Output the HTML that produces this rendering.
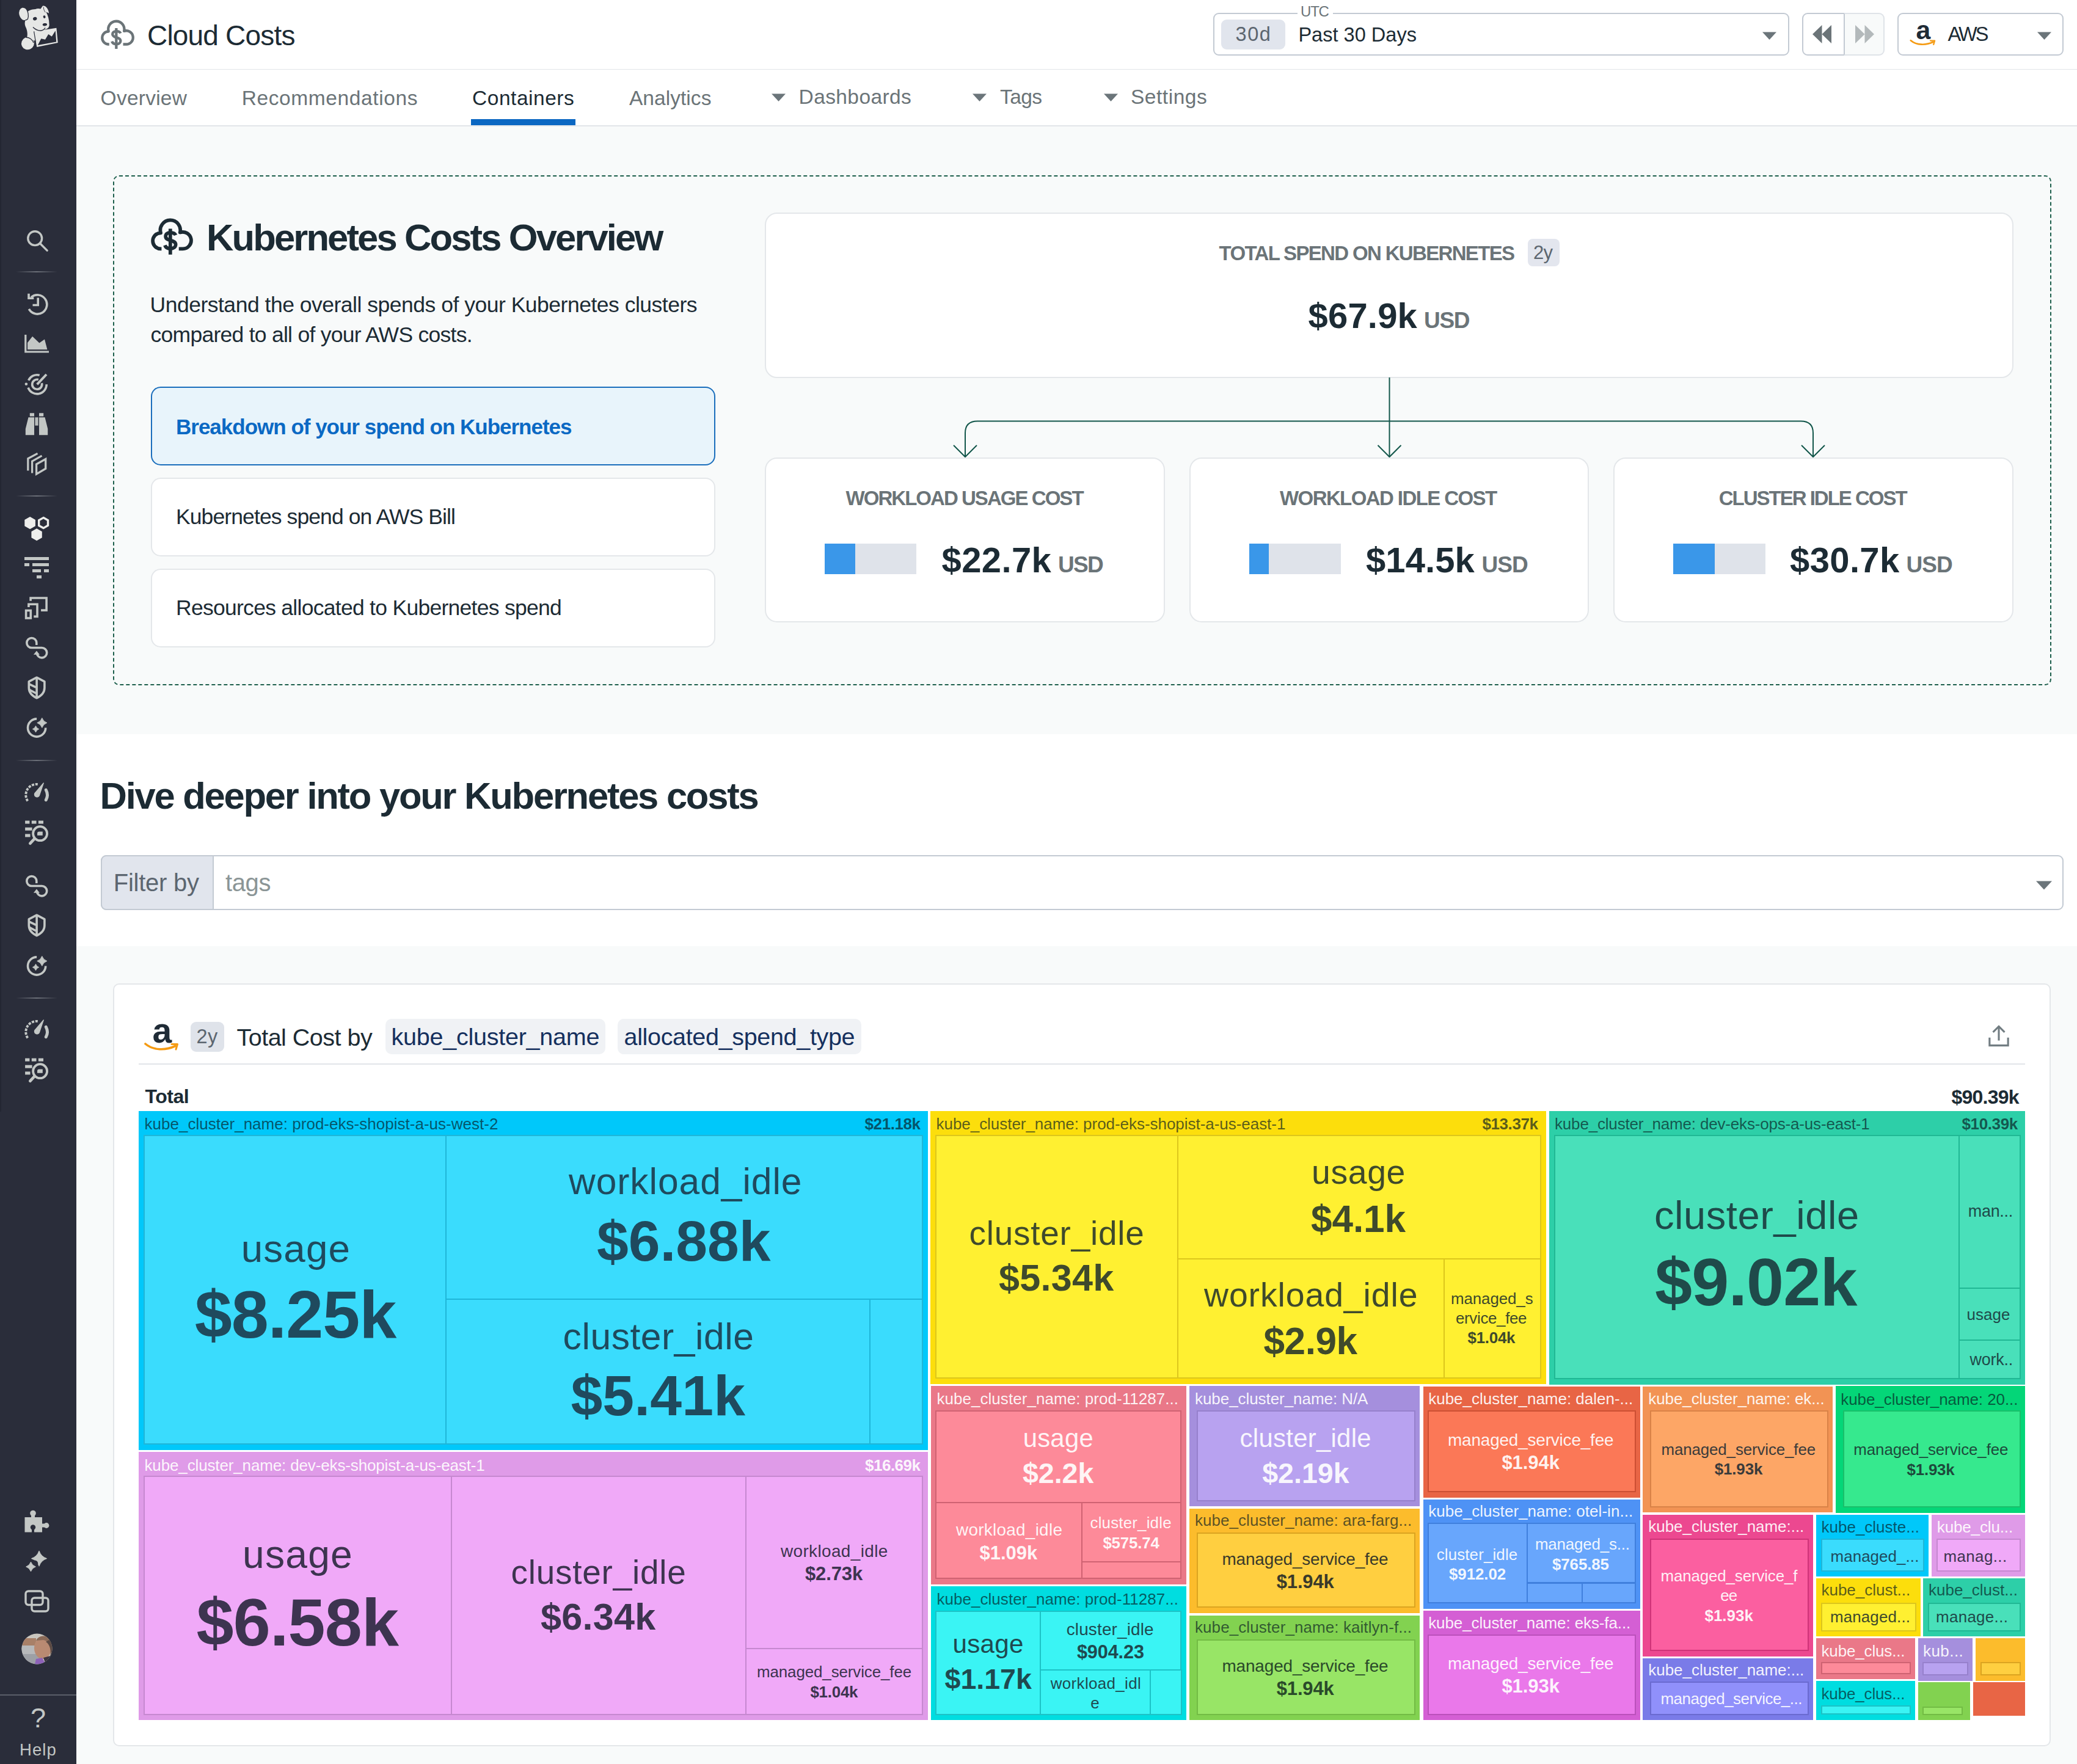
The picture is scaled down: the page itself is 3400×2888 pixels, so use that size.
<!DOCTYPE html>
<html lang="en"><head><meta charset="utf-8"><title>Cloud Costs</title>
<style>
html,body{margin:0;padding:0;}
body{width:3400px;height:2888px;position:relative;overflow:hidden;background:#f8fafa;font-family:"Liberation Sans",sans-serif;}
.b{position:absolute;box-sizing:border-box;}
.t{position:absolute;white-space:nowrap;line-height:1;}
svg{position:absolute;overflow:visible;}

</style></head><body>
<div class="b" style="left:124.0px;top:0.0px;width:3276.0px;height:113.0px;background:#fff;"></div>
<div class="b" style="left:124.0px;top:112.7px;width:3276.0px;height:2.0px;background:#e2e5e9;"></div>
<div class="b" style="left:124.0px;top:114.0px;width:3276.0px;height:91.5px;background:#fff;"></div>
<div class="b" style="left:124.0px;top:204.8px;width:3276.0px;height:1.8px;background:#e2e5e9;"></div>
<div class="b" style="left:124.0px;top:1202.0px;width:3276.0px;height:347.0px;background:#fff;"></div>
<svg style="left:165px;top:32px" width="55" height="49" viewBox="0 0 56 50" fill="none" stroke="#6b7478" stroke-width="4.4" stroke-linecap="butt" stroke-linejoin="round">
<path d="M14 41.3 H13 A10.7 10.7 0 0 1 12.92 19.90 A13.4 13.4 0 1 1 38.83 19.31 A11.3 11.3 0 1 1 42.5 41.3 H37.2"/>
<path d="M25.8 14.3 V49" stroke-width="4.4"/>
<path d="M33 23 C32 20.5 29.5 19.5 26 19.5 C22 19.5 19.5 21.5 19.5 24.5 C19.5 28 22.5 29 26 30 C30 31 33 32 33 35.5 C33 39 30 41 26 41 C22 41 19.5 39.5 18.5 36.5" stroke-width="4.4"/>
</svg>
<div class="t" style="left:241.0px;top:34.6px;font-size:46.0px;letter-spacing:-0.81px;color:#1c2b34;">Cloud Costs</div>
<div class="b" style="left:1986.0px;top:21.0px;width:943.0px;height:70.0px;background:#fff;border:2px solid #c3cad3;border-radius:9px;"></div>
<div class="b" style="left:2123.5px;top:19.0px;width:58.0px;height:6.0px;background:#fff;"></div>
<div class="t" style="left:2129.0px;top:7.4px;font-size:24.0px;letter-spacing:-1.20px;color:#6b7478;">UTC</div>
<div class="b" style="left:1999.0px;top:32.0px;width:105.0px;height:49.0px;background:#e1e5ed;border-radius:9px;"></div>
<div class="t" style="left:2022.6px;top:39.8px;font-size:32.5px;letter-spacing:1.53px;color:#5c6670;">30d</div>
<div class="t" style="left:2125.4px;top:40.8px;font-size:32.5px;letter-spacing:0.02px;color:#1c2b34;">Past 30 Days</div>
<svg style="left:2885px;top:52px" width="23" height="13" viewBox="0 0 23 13"><path d="M0 0.5 H23 L11.5 13 Z" fill="#6b757a"/></svg>
<div class="b" style="left:2950.0px;top:21.0px;width:70.0px;height:70.0px;background:#fff;border:2px solid #c3cad3;border-radius:9px 0 0 9px;"></div>
<div class="b" style="left:3018.0px;top:21.0px;width:67.0px;height:70.0px;background:#f8fafa;border:2px solid #dfe3e8;border-radius:0 9px 9px 0;border-left:2px solid #c3cad3;"></div>
<svg style="left:2967px;top:41px" width="31" height="30" viewBox="0 0 31 30"><path d="M15.5 0 V30 L0 15 Z M31 0 V30 L15.5 15 Z" fill="#6b7478"/></svg>
<svg style="left:3037px;top:41px" width="31" height="30" viewBox="0 0 31 30"><path d="M0 0 V30 L15.5 15 Z M15.5 0 V30 L31 15 Z" fill="#b3b9bb"/></svg>
<div class="b" style="left:3106.0px;top:21.0px;width:272.0px;height:70.0px;background:#fff;border:2px solid #c3cad3;border-radius:9px;"></div>
<svg style="left:3127px;top:39.5px" width="42.0" height="35.2" viewBox="0 0 56 47">
<text x="12.5" y="32.6" font-family="Liberation Sans, sans-serif" font-weight="bold" font-size="57" fill="#1f2b36">a</text>
<path d="M1 35 C14 46 34 46 50 38.5" fill="none" stroke="#f59b13" stroke-width="3.6" stroke-linecap="round"/>
<path d="M44 35.5 L53.5 35.5 L51 44" fill="none" stroke="#f59b13" stroke-width="3" stroke-linecap="round" stroke-linejoin="round"/>
</svg>
<div class="t" style="left:3188.5px;top:40.1px;font-size:32.5px;letter-spacing:-2.97px;color:#1c2b34;">AWS</div>
<svg style="left:3335px;top:52px" width="23" height="13" viewBox="0 0 23 13"><path d="M0 0.5 H23 L11.5 13 Z" fill="#6b757a"/></svg>
<div class="t" style="left:164.6px;top:143.6px;font-size:33.5px;letter-spacing:0.24px;color:#6b7478;">Overview</div>
<div class="t" style="left:395.7px;top:143.6px;font-size:33.5px;letter-spacing:0.60px;color:#6b7478;">Recommendations</div>
<div class="t" style="left:773.0px;top:143.6px;font-size:33.5px;letter-spacing:0.53px;color:#1c2b34;">Containers</div>
<div class="b" style="left:771.0px;top:195.0px;width:171.0px;height:10.0px;background:#0b67c2;"></div>
<div class="t" style="left:1029.9px;top:143.6px;font-size:33.5px;letter-spacing:0.06px;color:#6b7478;">Analytics</div>
<svg style="left:1263.4px;top:152.5px" width="23" height="13" viewBox="0 0 23 13"><path d="M0 0.5 H23 L11.5 13 Z" fill="#6b757a"/></svg>
<div class="t" style="left:1307.6px;top:142.1px;font-size:33.5px;letter-spacing:0.39px;color:#6b7478;">Dashboards</div>
<svg style="left:1592px;top:152.5px" width="23" height="13" viewBox="0 0 23 13"><path d="M0 0.5 H23 L11.5 13 Z" fill="#6b757a"/></svg>
<div class="t" style="left:1637.0px;top:142.1px;font-size:33.5px;letter-spacing:-0.57px;color:#6b7478;">Tags</div>
<svg style="left:1806.5px;top:152.5px" width="23" height="13" viewBox="0 0 23 13"><path d="M0 0.5 H23 L11.5 13 Z" fill="#6b757a"/></svg>
<div class="t" style="left:1851.0px;top:142.1px;font-size:33.5px;letter-spacing:0.53px;color:#6b7478;">Settings</div>
<div class="b" style="left:185.0px;top:286.5px;width:3173.0px;height:835.0px;border:2px solid #1d5f4c;border-radius:10px;border-style:dashed;"></div>
<svg style="left:247px;top:357px" width="69" height="61" viewBox="0 0 56 50" fill="none" stroke="#1c2b34" stroke-width="4.7" stroke-linecap="butt" stroke-linejoin="round">
<path d="M14 41.3 H13 A10.7 10.7 0 0 1 12.92 19.90 A13.4 13.4 0 1 1 38.83 19.31 A11.3 11.3 0 1 1 42.5 41.3 H37.2"/>
<path d="M25.8 14.3 V49" stroke-width="4.7"/>
<path d="M33 23 C32 20.5 29.5 19.5 26 19.5 C22 19.5 19.5 21.5 19.5 24.5 C19.5 28 22.5 29 26 30 C30 31 33 32 33 35.5 C33 39 30 41 26 41 C22 41 19.5 39.5 18.5 36.5" stroke-width="4.7"/>
</svg>
<div class="t" style="left:338.0px;top:357.9px;font-size:61.5px;letter-spacing:-2.86px;color:#1c2b34;font-weight:bold;">Kubernetes Costs Overview</div>
<div class="t" style="left:245.5px;top:482.4px;font-size:35.5px;letter-spacing:-0.49px;color:#1c2b34;">Understand the overall spends of your Kubernetes clusters</div>
<div class="t" style="left:246.5px;top:530.9px;font-size:35.5px;letter-spacing:-0.73px;color:#1c2b34;">compared to all of your AWS costs.</div>
<div class="b" style="left:247.0px;top:633.0px;width:924.0px;height:129.0px;background:#e8f4fb;border:2px solid #1a6ebc;border-radius:16px;"></div>
<div class="t" style="left:288.0px;top:680.9px;font-size:35.0px;letter-spacing:-1.00px;color:#0b69c4;font-weight:bold;">Breakdown of your spend on Kubernetes</div>
<div class="b" style="left:247.0px;top:782.0px;width:924.0px;height:129.0px;background:#fff;border:2px solid #e4e7ea;border-radius:16px;"></div>
<div class="t" style="left:288.0px;top:829.4px;font-size:35.5px;letter-spacing:-0.90px;color:#1c2b34;">Kubernetes spend on AWS Bill</div>
<div class="b" style="left:247.0px;top:931.0px;width:924.0px;height:129.0px;background:#fff;border:2px solid #e4e7ea;border-radius:16px;"></div>
<div class="t" style="left:288.0px;top:978.3px;font-size:35.5px;letter-spacing:-0.72px;color:#1c2b34;">Resources allocated to Kubernetes spend</div>
<div class="b" style="left:1251.5px;top:348.3px;width:2044.7px;height:270.7px;background:#fff;border:2px solid #e4e7ea;border-radius:20px;"></div>
<div class="t" style="left:1995.5px;top:397.6px;font-size:33.0px;letter-spacing:-1.66px;color:#6b7478;font-weight:bold;">TOTAL SPEND ON KUBERNETES</div>
<div class="b" style="left:2501.0px;top:391.0px;width:52.0px;height:45.0px;background:#e3e6ee;border-radius:8px;"></div>
<div class="t" style="left:2510.0px;top:397.8px;font-size:31.0px;letter-spacing:-0.74px;color:#5c6670;">2y</div>
<div class="t" style="left:2141.5px;top:487.9px;font-size:58.0px;letter-spacing:0.19px;color:#1c2b34;font-weight:bold;">$67.9k</div>
<div class="t" style="left:2331.0px;top:505.7px;font-size:37.0px;letter-spacing:-1.30px;color:#6b7478;font-weight:bold;">USD</div>
<svg style="left:1540px;top:618px" width="1480" height="140" viewBox="1540 618 1480 140" fill="none" stroke="#12564a" stroke-width="2">
<path d="M2274.5 618 V747"/>
<path d="M1580 747 V709 Q1580 689.5 1600 689.5 H2948 Q2968 689.5 2968 709 V747"/>
<path d="M1561 729 L1580 748 L1599 729"/>
<path d="M2255.5 729 L2274.5 748 L2293.5 729"/>
<path d="M2949 729 L2968 748 L2987 729"/>
</svg>
<div class="b" style="left:1251.5px;top:748.9px;width:655.9px;height:269.8px;background:#fff;border:2px solid #e4e7ea;border-radius:20px;"></div>
<div class="t" style="left:1384.5px;top:798.6px;font-size:33.0px;letter-spacing:-1.96px;color:#6b7478;font-weight:bold;">WORKLOAD USAGE COST</div>
<div class="b" style="left:1350.0px;top:890.0px;width:150.0px;height:50.0px;background:#dfe3ea;"></div>
<div class="b" style="left:1350.0px;top:890.0px;width:50.0px;height:50.0px;background:#3a97e9;"></div>
<div class="t" style="left:1541.6px;top:888.3px;font-size:58.0px;letter-spacing:0.35px;color:#1c2b34;font-weight:bold;">$22.7k</div>
<div class="t" style="left:1732.0px;top:906.1px;font-size:37.0px;letter-spacing:-1.70px;color:#6b7478;font-weight:bold;">USD</div>
<div class="b" style="left:1947.0px;top:748.9px;width:654.4px;height:269.8px;background:#fff;border:2px solid #e4e7ea;border-radius:20px;"></div>
<div class="t" style="left:2095.0px;top:798.6px;font-size:33.0px;letter-spacing:-1.59px;color:#6b7478;font-weight:bold;">WORKLOAD IDLE COST</div>
<div class="b" style="left:2044.6px;top:890.0px;width:150.4px;height:50.0px;background:#dfe3ea;"></div>
<div class="b" style="left:2044.6px;top:890.0px;width:32.4px;height:50.0px;background:#3a97e9;"></div>
<div class="t" style="left:2236.0px;top:888.3px;font-size:58.0px;letter-spacing:0.07px;color:#1c2b34;font-weight:bold;">$14.5k</div>
<div class="t" style="left:2425.6px;top:906.1px;font-size:37.0px;letter-spacing:-1.00px;color:#6b7478;font-weight:bold;">USD</div>
<div class="b" style="left:2641.0px;top:748.9px;width:655.2px;height:269.8px;background:#fff;border:2px solid #e4e7ea;border-radius:20px;"></div>
<div class="t" style="left:2813.7px;top:798.6px;font-size:33.0px;letter-spacing:-2.00px;color:#6b7478;font-weight:bold;">CLUSTER IDLE COST</div>
<div class="b" style="left:2739.4px;top:890.0px;width:150.6px;height:50.0px;background:#dfe3ea;"></div>
<div class="b" style="left:2739.4px;top:890.0px;width:68.0px;height:50.0px;background:#3a97e9;"></div>
<div class="t" style="left:2930.0px;top:888.3px;font-size:58.0px;letter-spacing:0.37px;color:#1c2b34;font-weight:bold;">$30.7k</div>
<div class="t" style="left:3120.5px;top:906.1px;font-size:37.0px;letter-spacing:-0.95px;color:#6b7478;font-weight:bold;">USD</div>
<div class="t" style="left:163.5px;top:1271.9px;font-size:61.5px;letter-spacing:-2.24px;color:#1c2b34;font-weight:bold;">Dive deeper into your Kubernetes costs</div>
<div class="b" style="left:164.5px;top:1399.5px;width:3213.5px;height:90.5px;background:#fff;border:2px solid #c3cad3;border-radius:9px;"></div>
<div class="b" style="left:164.5px;top:1399.5px;width:185.5px;height:90.5px;background:#e1e5ed;border:2px solid #c3cad3;border-radius:9px 0 0 9px;"></div>
<div class="t" style="left:185.8px;top:1424.9px;font-size:40.0px;letter-spacing:-0.25px;color:#5c6670;">Filter by</div>
<div class="t" style="left:369.0px;top:1424.9px;font-size:40.0px;letter-spacing:-0.37px;color:#8b9596;">tags</div>
<svg style="left:3333px;top:1442px" width="26" height="14.5" viewBox="0 0 26 14.5"><path d="M0 0.5 H26 L13.0 14.5 Z" fill="#6b757a"/></svg>
<div class="b" style="left:184.6px;top:1609.7px;width:3172.8px;height:1249.1px;background:#fff;border:2px solid #e4e7ea;border-radius:10px;"></div>
<svg style="left:236.5px;top:1673.5px" width="56.0" height="47.0" viewBox="0 0 56 47">
<text x="12.5" y="32.6" font-family="Liberation Sans, sans-serif" font-weight="bold" font-size="57" fill="#1f2b36">a</text>
<path d="M1 35 C14 46 34 46 50 38.5" fill="none" stroke="#f59b13" stroke-width="3.6" stroke-linecap="round"/>
<path d="M44 35.5 L53.5 35.5 L51 44" fill="none" stroke="#f59b13" stroke-width="3" stroke-linecap="round" stroke-linejoin="round"/>
</svg>
<div class="b" style="left:312.0px;top:1673.0px;width:55.0px;height:49.0px;background:#dfe3ea;border-radius:9px;"></div>
<div class="t" style="left:321.5px;top:1680.5px;font-size:32.5px;letter-spacing:0.43px;color:#5c6670;">2y</div>
<div class="t" style="left:387.5px;top:1678.6px;font-size:39.5px;letter-spacing:-0.51px;color:#1c2b34;">Total Cost by</div>
<div class="b" style="left:631.0px;top:1667.5px;width:359.5px;height:58.5px;background:#f0f2f5;border-radius:10px;"></div>
<div class="t" style="left:640.5px;top:1677.6px;font-size:39.5px;letter-spacing:-0.24px;color:#15305e;">kube_cluster_name</div>
<div class="b" style="left:1011.0px;top:1667.5px;width:399.0px;height:58.5px;background:#f0f2f5;border-radius:10px;"></div>
<div class="t" style="left:1021.5px;top:1677.6px;font-size:39.5px;letter-spacing:-0.33px;color:#15305e;">allocated_spend_type</div>
<svg style="left:3253.5px;top:1678px" width="36" height="36" viewBox="0 0 38 38" fill="none" stroke="#727d82" stroke-width="3.3"><path d="M3 22 V35.5 H35 V22"/><path d="M19 27 V3"/><path d="M9 12.5 L19 2.5 L29 12.5"/></svg>
<div class="b" style="left:227.0px;top:1741.0px;width:3088.0px;height:2.0px;background:#e2e5e9;"></div>
<div class="t" style="left:237.6px;top:1778.9px;font-size:32.0px;letter-spacing:-0.52px;color:#1c2b34;font-weight:bold;">Total</div>
<div class="t" style="left:3194.5px;top:1779.9px;font-size:32.0px;letter-spacing:-0.76px;color:#1c2b34;font-weight:bold;">$90.39k</div>
<div class="b" style="left:227.0px;top:1819.0px;width:1292.0px;height:555.0px;background:#00c8fa;"></div>
<div class="b" style="left:235.0px;top:1858.0px;width:496.0px;height:507.0px;background:#3adcfd;border:2px solid #1fb6d8;"></div>
<div class="b" style="left:729.0px;top:1858.0px;width:782.0px;height:269.5px;background:#3adcfd;border:2px solid #1fb6d8;"></div>
<div class="b" style="left:729.0px;top:2125.5px;width:696.0px;height:239.5px;background:#3adcfd;border:2px solid #1fb6d8;"></div>
<div class="b" style="left:1423.0px;top:2125.5px;width:88.0px;height:239.5px;background:#3adcfd;border:2px solid #1fb6d8;"></div>
<div class="t" style="left:236.5px;top:1827.0px;font-size:26.0px;letter-spacing:0.02px;color:rgba(8,26,34,0.68);">kube_cluster_name: prod-eks-shopist-a-us-west-2</div>
<div class="t" style="left:1415.6px;top:1826.5px;font-size:26.0px;letter-spacing:-0.44px;color:rgba(8,26,34,0.68);font-weight:bold;">$21.18k</div>
<div class="t" style="left:394.8px;top:2012.1px;font-size:63.7px;letter-spacing:1.15px;color:#1f4a5e;">usage</div>
<div class="t" style="left:318.8px;top:2097.5px;font-size:109.7px;letter-spacing:-1.01px;color:#1f4a5e;font-weight:bold;">$8.25k</div>
<div class="t" style="left:931.0px;top:1904.2px;font-size:60.5px;letter-spacing:0.96px;color:#1f4a5e;">workload_idle</div>
<div class="t" style="left:977.0px;top:1986.1px;font-size:93.1px;letter-spacing:-0.02px;color:#1f4a5e;font-weight:bold;">$6.88k</div>
<div class="t" style="left:921.6px;top:2157.7px;font-size:60.5px;letter-spacing:0.57px;color:#1f4a5e;">cluster_idle</div>
<div class="t" style="left:934.4px;top:2239.4px;font-size:93.1px;letter-spacing:0.16px;color:#1f4a5e;font-weight:bold;">$5.41k</div>
<div class="b" style="left:227.0px;top:2376.8px;width:1292.0px;height:439.7px;background:#df9be8;"></div>
<div class="b" style="left:235.0px;top:2415.7px;width:505.0px;height:391.9px;background:#f0a9f8;border:2px solid #c688d0;"></div>
<div class="b" style="left:738.0px;top:2415.7px;width:484.0px;height:391.9px;background:#f0a9f8;border:2px solid #c688d0;"></div>
<div class="b" style="left:1220.0px;top:2415.7px;width:291.0px;height:284.3px;background:#f0a9f8;border:2px solid #c688d0;"></div>
<div class="b" style="left:1220.0px;top:2698.0px;width:291.0px;height:109.6px;background:#f0a9f8;border:2px solid #c688d0;"></div>
<div class="t" style="left:236.5px;top:2385.5px;font-size:26.0px;letter-spacing:-0.14px;color:rgba(255,255,255,0.93);">kube_cluster_name: dev-eks-shopist-a-us-east-1</div>
<div class="t" style="left:1416.0px;top:2385.5px;font-size:26.0px;letter-spacing:-0.50px;color:rgba(255,255,255,0.93);font-weight:bold;">$16.69k</div>
<div class="t" style="left:397.0px;top:2513.2px;font-size:64.2px;letter-spacing:1.22px;color:#3d3450;">usage</div>
<div class="t" style="left:321.5px;top:2602.1px;font-size:109.7px;letter-spacing:-0.81px;color:#3d3450;font-weight:bold;">$6.58k</div>
<div class="t" style="left:836.5px;top:2547.1px;font-size:54.9px;letter-spacing:0.78px;color:#3d3450;">cluster_idle</div>
<div class="t" style="left:885.0px;top:2616.8px;font-size:61.1px;letter-spacing:0.25px;color:#3d3450;font-weight:bold;">$6.34k</div>
<div class="t" style="left:1278.0px;top:2525.8px;font-size:27.9px;letter-spacing:0.39px;color:#3d3450;">workload_idle</div>
<div class="t" style="left:1318.0px;top:2561.2px;font-size:31.0px;letter-spacing:-0.14px;color:#3d3450;font-weight:bold;">$2.73k</div>
<div class="t" style="left:1239.0px;top:2725.1px;font-size:25.9px;letter-spacing:-0.09px;color:#3d3450;">managed_service_fee</div>
<div class="t" style="left:1326.4px;top:2758.1px;font-size:25.9px;letter-spacing:-0.22px;color:#3d3450;font-weight:bold;">$1.04k</div>
<div class="b" style="left:1523.0px;top:1819.0px;width:1008.0px;height:446.5px;background:#fcde0c;"></div>
<div class="b" style="left:1530.5px;top:1858.0px;width:398.0px;height:399.0px;background:#fff031;border:2px solid #dcc61c;"></div>
<div class="b" style="left:1926.5px;top:1858.0px;width:596.0px;height:204.0px;background:#fff031;border:2px solid #dcc61c;"></div>
<div class="b" style="left:1926.5px;top:2060.0px;width:438.5px;height:197.0px;background:#fff031;border:2px solid #dcc61c;"></div>
<div class="b" style="left:2363.0px;top:2060.0px;width:159.5px;height:197.0px;background:#fff031;border:2px solid #dcc61c;"></div>
<div class="t" style="left:1532.5px;top:1827.0px;font-size:26.0px;letter-spacing:-0.04px;color:rgba(8,26,34,0.68);">kube_cluster_name: prod-eks-shopist-a-us-east-1</div>
<div class="t" style="left:2426.5px;top:1826.5px;font-size:26.0px;letter-spacing:-0.42px;color:rgba(8,26,34,0.68);font-weight:bold;">$13.37k</div>
<div class="t" style="left:1586.5px;top:1992.1px;font-size:54.9px;letter-spacing:0.78px;color:#3f4a2c;">cluster_idle</div>
<div class="t" style="left:1635.0px;top:2061.8px;font-size:61.1px;letter-spacing:0.25px;color:#3f4a2c;font-weight:bold;">$5.34k</div>
<div class="t" style="left:2147.0px;top:1891.6px;font-size:55.4px;letter-spacing:0.61px;color:#3f4a2c;">usage</div>
<div class="t" style="left:2146.0px;top:1964.9px;font-size:62.1px;letter-spacing:-0.09px;color:#3f4a2c;font-weight:bold;">$4.1k</div>
<div class="t" style="left:1971.0px;top:2093.1px;font-size:55.4px;letter-spacing:0.90px;color:#3f4a2c;">workload_idle</div>
<div class="t" style="left:2068.5px;top:2164.9px;font-size:62.1px;letter-spacing:-0.46px;color:#3f4a2c;font-weight:bold;">$2.9k</div>
<div class="t" style="left:2375.0px;top:2114.1px;font-size:25.9px;letter-spacing:-0.09px;color:#3f4a2c;">managed_s</div>
<div class="t" style="left:2383.0px;top:2145.6px;font-size:25.9px;letter-spacing:-0.33px;color:#3f4a2c;">ervice_fee</div>
<div class="t" style="left:2402.5px;top:2178.1px;font-size:25.9px;letter-spacing:-0.24px;color:#3f4a2c;font-weight:bold;">$1.04k</div>
<div class="b" style="left:2536.0px;top:1819.0px;width:779.0px;height:447.5px;background:#2dcfa8;"></div>
<div class="b" style="left:2543.6px;top:1858.4px;width:664.4px;height:399.6px;background:#49e0ba;border:2px solid #20b894;"></div>
<div class="b" style="left:3206.0px;top:1858.4px;width:101.8px;height:252.0px;background:#49e0ba;border:2px solid #20b894;"></div>
<div class="b" style="left:3206.0px;top:2108.4px;width:101.8px;height:86.9px;background:#49e0ba;border:2px solid #20b894;"></div>
<div class="b" style="left:3206.0px;top:2193.3px;width:101.8px;height:64.7px;background:#49e0ba;border:2px solid #20b894;"></div>
<div class="t" style="left:2545.0px;top:1826.5px;font-size:26.0px;letter-spacing:-0.18px;color:rgba(8,26,34,0.68);">kube_cluster_name: dev-eks-ops-a-us-east-1</div>
<div class="t" style="left:3211.5px;top:1826.5px;font-size:26.0px;letter-spacing:-0.37px;color:rgba(8,26,34,0.68);font-weight:bold;">$10.39k</div>
<div class="t" style="left:2708.0px;top:1957.3px;font-size:65.0px;letter-spacing:0.57px;color:#1f4a4a;">cluster_idle</div>
<div class="t" style="left:2709.0px;top:2045.1px;font-size:109.7px;letter-spacing:-0.79px;color:#1f4a4a;font-weight:bold;">$9.02k</div>
<div class="t" style="left:3221.8px;top:1970.0px;font-size:26.9px;letter-spacing:-0.26px;color:#1f4a4a;">man...</div>
<div class="t" style="left:3219.6px;top:2139.9px;font-size:25.9px;letter-spacing:0.08px;color:#1f4a4a;">usage</div>
<div class="t" style="left:3224.6px;top:2212.7px;font-size:26.9px;letter-spacing:-0.22px;color:#1f4a4a;">work..</div>
<div class="b" style="left:1523.5px;top:2269.0px;width:418.1px;height:324.8px;background:#ea7888;"></div>
<div class="b" style="left:1531.4px;top:2309.0px;width:403.1px;height:151.5px;background:#fd8a99;border:2px solid #cf6272;"></div>
<div class="b" style="left:1531.4px;top:2458.5px;width:240.2px;height:126.5px;background:#fd8a99;border:2px solid #cf6272;"></div>
<div class="b" style="left:1769.6px;top:2458.5px;width:164.9px;height:99.1px;background:#fd8a99;border:2px solid #cf6272;"></div>
<div class="b" style="left:1769.6px;top:2555.6px;width:164.9px;height:29.4px;background:#fd8a99;border:2px solid #cf6272;"></div>
<div class="t" style="left:1533.4px;top:2277.3px;font-size:26.0px;letter-spacing:0.05px;color:rgba(255,255,255,0.93);">kube_cluster_name: prod-11287...</div>
<div class="t" style="left:1674.7px;top:2334.1px;font-size:41.8px;letter-spacing:0.27px;color:rgba(255,255,255,0.93);">usage</div>
<div class="t" style="left:1674.0px;top:2388.8px;font-size:46.6px;letter-spacing:-0.06px;color:rgba(255,255,255,0.93);font-weight:bold;">$2.2k</div>
<div class="t" style="left:1565.0px;top:2490.7px;font-size:27.9px;letter-spacing:0.28px;color:rgba(255,255,255,0.93);">workload_idle</div>
<div class="t" style="left:1603.5px;top:2526.5px;font-size:31.0px;letter-spacing:-0.04px;color:rgba(255,255,255,0.93);font-weight:bold;">$1.09k</div>
<div class="t" style="left:1784.5px;top:2481.2px;font-size:25.9px;letter-spacing:0.19px;color:rgba(255,255,255,0.93);">cluster_idle</div>
<div class="t" style="left:1805.4px;top:2513.9px;font-size:25.9px;letter-spacing:-0.18px;color:rgba(255,255,255,0.93);font-weight:bold;">$575.74</div>
<div class="b" style="left:1523.5px;top:2597.0px;width:418.1px;height:219.2px;background:#00dde0;"></div>
<div class="b" style="left:1531.4px;top:2637.3px;width:173.0px;height:170.7px;background:#3af4f4;border:2px solid #1cc2c6;"></div>
<div class="b" style="left:1702.4px;top:2637.3px;width:232.1px;height:97.7px;background:#3af4f4;border:2px solid #1cc2c6;"></div>
<div class="b" style="left:1702.4px;top:2733.0px;width:181.6px;height:75.0px;background:#3af4f4;border:2px solid #1cc2c6;"></div>
<div class="b" style="left:1882.0px;top:2733.0px;width:52.5px;height:75.0px;background:#3af4f4;border:2px solid #1cc2c6;"></div>
<div class="t" style="left:1533.4px;top:2605.0px;font-size:26.0px;letter-spacing:0.05px;color:rgba(8,26,34,0.68);">kube_cluster_name: prod-11287...</div>
<div class="t" style="left:1559.5px;top:2670.8px;font-size:42.1px;letter-spacing:0.30px;color:#1f4a50;">usage</div>
<div class="t" style="left:1546.5px;top:2725.7px;font-size:46.6px;letter-spacing:-0.02px;color:#1f4a50;font-weight:bold;">$1.17k</div>
<div class="t" style="left:1745.7px;top:2653.7px;font-size:27.9px;letter-spacing:0.17px;color:#1f4a50;">cluster_idle</div>
<div class="t" style="left:1762.9px;top:2688.6px;font-size:30.6px;letter-spacing:-0.09px;color:#1f4a50;font-weight:bold;">$904.23</div>
<div class="t" style="left:1719.8px;top:2744.0px;font-size:25.9px;letter-spacing:0.36px;color:#1f4a50;">workload_idl</div>
<div class="t" style="left:1785.3px;top:2775.6px;font-size:25.9px;letter-spacing:0.00px;color:#1f4a50;">e</div>
<div class="b" style="left:1947.0px;top:2269.0px;width:377.2px;height:197.4px;background:#a58fdd;"></div>
<div class="b" style="left:1958.8px;top:2309.0px;width:358.2px;height:149.0px;background:#b8a2f0;border:2px solid #9680cc;"></div>
<div class="t" style="left:1956.0px;top:2277.3px;font-size:26.0px;letter-spacing:-0.06px;color:rgba(255,255,255,0.93);">kube_cluster_name: N/A</div>
<div class="t" style="left:2029.6px;top:2334.1px;font-size:41.8px;letter-spacing:0.32px;color:rgba(255,255,255,0.93);">cluster_idle</div>
<div class="t" style="left:2066.2px;top:2388.8px;font-size:46.6px;letter-spacing:-0.02px;color:rgba(255,255,255,0.93);font-weight:bold;">$2.19k</div>
<div class="b" style="left:1947.0px;top:2469.6px;width:377.2px;height:171.9px;background:#fcbc2c;"></div>
<div class="b" style="left:1958.8px;top:2509.0px;width:358.2px;height:123.4px;background:#ffcf40;border:2px solid #dba420;"></div>
<div class="t" style="left:1956.0px;top:2475.5px;font-size:26.0px;letter-spacing:0.04px;color:rgba(8,26,34,0.68);">kube_cluster_name: ara-farg...</div>
<div class="t" style="left:2000.5px;top:2539.2px;font-size:27.9px;letter-spacing:-0.13px;color:#3a3a2a;">managed_service_fee</div>
<div class="t" style="left:2089.7px;top:2573.8px;font-size:31.0px;letter-spacing:-0.14px;color:#3a3a2a;font-weight:bold;">$1.94k</div>
<div class="b" style="left:1947.0px;top:2645.0px;width:377.2px;height:171.2px;background:#82d250;"></div>
<div class="b" style="left:1958.8px;top:2683.8px;width:358.2px;height:124.2px;background:#98e566;border:2px solid #72bc44;"></div>
<div class="t" style="left:1956.0px;top:2650.6px;font-size:26.0px;letter-spacing:0.08px;color:rgba(8,26,34,0.68);">kube_cluster_name: kaitlyn-f...</div>
<div class="t" style="left:2000.5px;top:2714.3px;font-size:27.9px;letter-spacing:-0.13px;color:#2a4a2a;">managed_service_fee</div>
<div class="t" style="left:2089.7px;top:2748.9px;font-size:31.0px;letter-spacing:-0.14px;color:#2a4a2a;font-weight:bold;">$1.94k</div>
<div class="b" style="left:2329.5px;top:2269.8px;width:355.3px;height:182.0px;background:#e86545;"></div>
<div class="b" style="left:2337.0px;top:2308.6px;width:340.8px;height:134.1px;background:#fb7857;border:2px solid #cc4f33;"></div>
<div class="t" style="left:2338.2px;top:2276.5px;font-size:26.0px;letter-spacing:-0.01px;color:rgba(255,255,255,0.93);">kube_cluster_name: dalen-...</div>
<div class="t" style="left:2370.0px;top:2343.8px;font-size:27.9px;letter-spacing:-0.16px;color:rgba(255,255,255,0.93);">managed_service_fee</div>
<div class="t" style="left:2458.4px;top:2378.8px;font-size:31.0px;letter-spacing:-0.06px;color:rgba(255,255,255,0.93);font-weight:bold;">$1.94k</div>
<div class="b" style="left:2329.5px;top:2454.5px;width:355.3px;height:179.5px;background:#4e92f5;"></div>
<div class="b" style="left:2337.0px;top:2493.4px;width:164.0px;height:132.0px;background:#68a6fc;border:2px solid #3f7fdd;"></div>
<div class="b" style="left:2499.0px;top:2493.4px;width:178.8px;height:99.1px;background:#68a6fc;border:2px solid #3f7fdd;"></div>
<div class="b" style="left:2499.0px;top:2590.5px;width:92.0px;height:34.9px;background:#68a6fc;border:2px solid #3f7fdd;"></div>
<div class="b" style="left:2589.0px;top:2590.5px;width:88.8px;height:34.9px;background:#68a6fc;border:2px solid #3f7fdd;"></div>
<div class="t" style="left:2338.2px;top:2461.0px;font-size:26.0px;letter-spacing:0.04px;color:rgba(255,255,255,0.93);">kube_cluster_name: otel-in...</div>
<div class="t" style="left:2351.7px;top:2532.9px;font-size:25.9px;letter-spacing:0.14px;color:rgba(255,255,255,0.93);">cluster_idle</div>
<div class="t" style="left:2372.0px;top:2564.8px;font-size:25.9px;letter-spacing:-0.07px;color:rgba(255,255,255,0.93);font-weight:bold;">$912.02</div>
<div class="t" style="left:2512.9px;top:2516.3px;font-size:25.9px;letter-spacing:-0.16px;color:rgba(255,255,255,0.93);">managed_s...</div>
<div class="t" style="left:2541.0px;top:2548.6px;font-size:25.9px;letter-spacing:-0.10px;color:rgba(255,255,255,0.93);font-weight:bold;">$765.85</div>
<div class="b" style="left:2329.5px;top:2637.2px;width:355.3px;height:178.8px;background:#d45fd4;"></div>
<div class="b" style="left:2337.0px;top:2676.4px;width:340.8px;height:131.6px;background:#ea78ea;border:2px solid #bb50bb;"></div>
<div class="t" style="left:2338.2px;top:2644.0px;font-size:26.0px;letter-spacing:-0.10px;color:rgba(255,255,255,0.93);">kube_cluster_name: eks-fa...</div>
<div class="t" style="left:2370.0px;top:2709.6px;font-size:27.9px;letter-spacing:-0.16px;color:rgba(255,255,255,0.93);">managed_service_fee</div>
<div class="t" style="left:2458.4px;top:2745.2px;font-size:31.0px;letter-spacing:-0.06px;color:rgba(255,255,255,0.93);font-weight:bold;">$1.93k</div>
<div class="b" style="left:2689.3px;top:2269.8px;width:310.9px;height:206.6px;background:#f29354;"></div>
<div class="b" style="left:2701.0px;top:2308.6px;width:291.6px;height:159.8px;background:#fda666;border:2px solid #d98247;"></div>
<div class="t" style="left:2698.3px;top:2276.5px;font-size:26.0px;letter-spacing:-0.09px;color:rgba(255,255,255,0.93);">kube_cluster_name: ek...</div>
<div class="t" style="left:2719.5px;top:2361.3px;font-size:25.9px;letter-spacing:-0.12px;color:#3b3b3b;">managed_service_fee</div>
<div class="t" style="left:2806.8px;top:2393.2px;font-size:25.9px;letter-spacing:-0.14px;color:#3b3b3b;font-weight:bold;">$1.93k</div>
<div class="b" style="left:2689.3px;top:2479.5px;width:279.1px;height:232.2px;background:#ec4890;"></div>
<div class="b" style="left:2701.0px;top:2518.7px;width:259.7px;height:184.7px;background:#fb5fa0;border:2px solid #cf3378;"></div>
<div class="t" style="left:2698.3px;top:2486.3px;font-size:26.0px;letter-spacing:-0.04px;color:rgba(255,255,255,0.93);">kube_cluster_name:...</div>
<div class="t" style="left:2718.5px;top:2567.6px;font-size:25.9px;letter-spacing:-0.13px;color:rgba(255,255,255,0.93);">managed_service_f</div>
<div class="t" style="left:2816.2px;top:2599.8px;font-size:25.9px;letter-spacing:-0.93px;color:rgba(255,255,255,0.93);">ee</div>
<div class="t" style="left:2790.5px;top:2632.8px;font-size:25.9px;letter-spacing:0.02px;color:rgba(255,255,255,0.93);font-weight:bold;">$1.93k</div>
<div class="b" style="left:2689.3px;top:2715.2px;width:279.1px;height:100.8px;background:#7a7be8;"></div>
<div class="b" style="left:2701.0px;top:2753.4px;width:259.7px;height:54.6px;background:#9090fb;border:2px solid #6a6ad0;"></div>
<div class="t" style="left:2698.3px;top:2721.0px;font-size:26.0px;letter-spacing:-0.04px;color:rgba(255,255,255,0.93);">kube_cluster_name:...</div>
<div class="t" style="left:2718.5px;top:2769.3px;font-size:25.9px;letter-spacing:-0.47px;color:rgba(255,255,255,0.93);">managed_service_...</div>
<div class="b" style="left:3004.6px;top:2269.4px;width:310.7px;height:207.4px;background:#04d678;"></div>
<div class="b" style="left:3016.6px;top:2309.2px;width:291.3px;height:159.2px;background:#36e98e;border:2px solid #1abf6a;"></div>
<div class="t" style="left:3013.3px;top:2277.5px;font-size:26.0px;letter-spacing:-0.08px;color:rgba(8,26,34,0.68);">kube_cluster_name: 20...</div>
<div class="t" style="left:3034.3px;top:2361.0px;font-size:25.9px;letter-spacing:-0.09px;color:#1d4a3c;">managed_service_fee</div>
<div class="t" style="left:3121.6px;top:2393.5px;font-size:25.9px;letter-spacing:-0.22px;color:#1d4a3c;font-weight:bold;">$1.93k</div>
<div class="b" style="left:2972.8px;top:2479.8px;width:184.6px;height:101.3px;background:#00c8fa;"></div>
<div class="b" style="left:2980.8px;top:2519.2px;width:169.2px;height:53.9px;background:#3adcfd;border:2px solid #1fb6d8;"></div>
<div class="t" style="left:2981.5px;top:2487.2px;font-size:26.0px;letter-spacing:-0.00px;color:rgba(8,26,34,0.68);">kube_cluste...</div>
<div class="t" style="left:2996.5px;top:2535.6px;font-size:25.9px;letter-spacing:0.09px;color:#1f4a5e;">managed_...</div>
<div class="b" style="left:3162.4px;top:2479.8px;width:152.9px;height:101.3px;background:#df9be8;"></div>
<div class="b" style="left:3169.8px;top:2519.2px;width:138.1px;height:53.9px;background:#f0a9f8;border:2px solid #c688d0;"></div>
<div class="t" style="left:3170.8px;top:2487.2px;font-size:26.0px;letter-spacing:-0.14px;color:rgba(255,255,255,0.93);">kube_clu...</div>
<div class="t" style="left:3181.5px;top:2535.6px;font-size:25.9px;letter-spacing:0.41px;color:#3d3450;">manag...</div>
<div class="b" style="left:2972.8px;top:2583.8px;width:171.2px;height:95.3px;background:#fcde0c;"></div>
<div class="b" style="left:2980.8px;top:2623.6px;width:155.9px;height:47.2px;background:#fff031;border:2px solid #dcc61c;"></div>
<div class="t" style="left:2981.5px;top:2590.2px;font-size:26.0px;letter-spacing:-0.02px;color:rgba(8,26,34,0.68);">kube_clust...</div>
<div class="t" style="left:2995.9px;top:2635.3px;font-size:25.9px;letter-spacing:0.17px;color:#3f4a2c;">managed...</div>
<div class="b" style="left:3148.4px;top:2583.8px;width:166.9px;height:95.3px;background:#2dcfa8;"></div>
<div class="b" style="left:3155.7px;top:2623.6px;width:152.2px;height:47.2px;background:#49e0ba;border:2px solid #20b894;"></div>
<div class="t" style="left:3157.0px;top:2590.2px;font-size:26.0px;letter-spacing:-0.01px;color:rgba(8,26,34,0.68);">kube_clust...</div>
<div class="t" style="left:3169.0px;top:2635.3px;font-size:25.9px;letter-spacing:0.34px;color:#1f4a4a;">manage...</div>
<div class="b" style="left:2972.8px;top:2682.1px;width:162.2px;height:67.3px;background:#ea7888;"></div>
<div class="b" style="left:2980.8px;top:2720.6px;width:146.8px;height:20.4px;background:#fd8a99;border:2px solid #cf6272;"></div>
<div class="t" style="left:2981.5px;top:2689.6px;font-size:26.0px;letter-spacing:-0.16px;color:rgba(255,255,255,0.93);">kube_clus...</div>
<div class="b" style="left:3139.7px;top:2682.1px;width:89.6px;height:69.6px;background:#a58fdd;"></div>
<div class="b" style="left:3146.7px;top:2720.6px;width:75.3px;height:22.1px;background:#b8a2f0;border:2px solid #9680cc;"></div>
<div class="t" style="left:3148.0px;top:2689.6px;font-size:26.0px;letter-spacing:0.45px;color:rgba(255,255,255,0.93);">kub...</div>
<div class="b" style="left:3234.0px;top:2682.1px;width:81.3px;height:69.6px;background:#fcbc2c;"></div>
<div class="b" style="left:3241.7px;top:2720.6px;width:66.2px;height:22.1px;background:#ffcf40;border:2px solid #dba420;"></div>
<div class="b" style="left:2972.8px;top:2752.4px;width:162.2px;height:63.9px;background:#00dde0;"></div>
<div class="b" style="left:2980.8px;top:2791.8px;width:146.8px;height:15.4px;background:#3af4f4;border:2px solid #1cc2c6;"></div>
<div class="t" style="left:2981.5px;top:2759.8px;font-size:26.0px;letter-spacing:-0.16px;color:rgba(8,26,34,0.68);">kube_clus...</div>
<div class="b" style="left:3139.7px;top:2754.4px;width:85.3px;height:61.9px;background:#82d250;"></div>
<div class="b" style="left:3146.7px;top:2793.5px;width:66.3px;height:14.4px;background:#98e566;border:2px solid #72bc44;"></div>
<div class="b" style="left:3229.7px;top:2754.4px;width:85.6px;height:54.8px;background:#e86545;"></div>
<div class="b" style="left:0.0px;top:0.0px;width:124.5px;height:2888.0px;background:#2a2d3a;"></div>
<div class="b" style="left:0.0px;top:0.0px;width:2.0px;height:1820.0px;background:#232632;"></div>
<div class="b" style="left:26px;top:444px;width:68px;height:2px;background:linear-gradient(90deg,rgba(120,124,132,0),rgba(125,129,137,.8) 50%,rgba(120,124,132,0))"></div>
<div class="b" style="left:26px;top:811px;width:68px;height:2px;background:linear-gradient(90deg,rgba(120,124,132,0),rgba(125,129,137,.8) 50%,rgba(120,124,132,0))"></div>
<div class="b" style="left:26px;top:1244px;width:68px;height:2px;background:linear-gradient(90deg,rgba(120,124,132,0),rgba(125,129,137,.8) 50%,rgba(120,124,132,0))"></div>
<div class="b" style="left:26px;top:1633px;width:68px;height:2px;background:linear-gradient(90deg,rgba(120,124,132,0),rgba(125,129,137,.8) 50%,rgba(120,124,132,0))"></div>
<div class="b" style="left:0.0px;top:2773.6px;width:124.5px;height:2.0px;background:#5a5e69;"></div>
<svg style="left:20px;top:0px" width="90" height="90" viewBox="0 0 90 90">
<g fill="#e6e7e5">
<path d="M22 32 C19 24 24 15.5 38 15 C41 13.5 44 14 46.5 14.5 L50 9.6 C55 8.6 59.5 15 60.2 21.8 L55.5 19.5 C58.5 25 60.5 32 60.5 39 C61.5 44 58 47.5 54 48 L47 51.5 L37 53 L38 67 L24 62 C26 55 24 48 21.5 43 C20 39 20.5 35 22 32 Z"/>
<ellipse cx="18.8" cy="22.8" rx="7.4" ry="10.3" transform="rotate(-14 18.8 22.8)"/>
<ellipse cx="25.5" cy="71" rx="10.6" ry="10.2" transform="rotate(-25 25.5 71)"/>
<path d="M35.7 51.5 L72.4 45.7 L74.7 69.9 L40.3 77 Z"/>
</g>
<path d="M41.8 74 L47.4 63.3 L54 64.8 L59.2 56.1 L64.8 59.7 L70.7 50.3 L72.2 68.4 Z" fill="#2a2d3a"/>
<path d="M35.6 51.3 L38.3 68.5" stroke="#2a2d3a" stroke-width="1.2" fill="none"/>
<ellipse cx="37.2" cy="30.6" rx="3.3" ry="2.7" fill="#2a2d3a" transform="rotate(-20 37.2 30.6)"/>
<ellipse cx="52.6" cy="27.6" rx="1.9" ry="2.4" fill="#2a2d3a" transform="rotate(-15 52.6 27.6)"/>
<ellipse cx="53.4" cy="40.2" rx="3.7" ry="2.2" fill="#2a2d3a" transform="rotate(-8 53.4 40.2)"/>
<path d="M34 44.5 C37 47.5 42 50.2 46.5 50.2 C50 49.6 53 47.8 54 45.5" stroke="#2a2d3a" stroke-width="1.4" fill="none"/>
<path d="M22.5 13.5 C26 18 27.5 26 25.5 31 C24.5 32 23 32.8 21.5 33" stroke="#2a2d3a" stroke-width="1.3" fill="none"/>
<path d="M51.3 11.5 C51.3 15 52.5 18 54.2 20.2" stroke="#2a2d3a" stroke-width="0.9" fill="none"/>
<path d="M22.5 61.2 C28 61 33 64.5 35 70" stroke="#2a2d3a" stroke-width="1.4" fill="none"/>
</svg>
<svg style="left:41.5px;top:374.5px" width="38" height="38" viewBox="0 0 40 40" fill="none" stroke="#c3c7c5" stroke-width="3.6" stroke-linecap="butt" stroke-linejoin="miter"><circle cx="16" cy="16" r="12"/><path d="M25 25 L37 37" stroke-linecap="round"/></svg>
<svg style="left:41.0px;top:477.5px" width="40" height="40" viewBox="0 0 40 40" fill="none" stroke="#c3c7c5" stroke-width="3.6" stroke-linecap="butt" stroke-linejoin="miter"><path d="M10 8.7 A15.6 15.6 0 1 1 6.4 27.8"/><path d="M6 2.7 V10.2 H14.3"/><path d="M21.2 9.5 V21.5 H12.5"/></svg>
<svg style="left:40.0px;top:543.0px" width="40" height="40" viewBox="0 0 40 40" fill="none" stroke="#c3c7c5" stroke-width="3.6" stroke-linecap="butt" stroke-linejoin="miter"><path d="M1.8 5 V33 H40" stroke-width="3.2"/><path d="M5.1 29.3 V18 L13.1 7.7 L24.4 18.5 L33 12.6 L37.4 29.3 Z" fill="#c3c7c5" stroke="none"/></svg>
<svg style="left:40.0px;top:609.0px" width="40" height="40" viewBox="0 0 40 40" fill="none" stroke="#c3c7c5" stroke-width="3.6" stroke-linecap="butt" stroke-linejoin="miter"><path d="M24.7 5.3 A15.5 15.5 0 0 0 6.65 13.75"/><path d="M6.1 25.6 A15.5 15.5 0 0 0 36.2 20.3"/><circle cx="2.9" cy="19.8" r="2.3" fill="#c3c7c5" stroke="none"/><path d="M28.4 18.2 A8 8 0 1 1 22.8 12.6"/><path d="M20.7 20.3 L36 4" stroke-width="4"/></svg>
<svg style="left:40.0px;top:674.5px" width="40" height="40" viewBox="0 0 40 40" fill="none" stroke="#c3c7c5" stroke-width="3.6" stroke-linecap="butt" stroke-linejoin="miter"><g fill="#c3c7c5" stroke="none"><path d="M6.5 8.3 H16 V37.3 H1.8 V27 Z"/><path d="M33.5 8.3 H24 V37.3 H38.2 V27 Z"/><rect x="8.8" y="1.3" width="7.2" height="5.3"/><rect x="24" y="1.3" width="7.2" height="5.3"/><rect x="17.4" y="8.3" width="5.2" height="13.4" opacity="0.93"/></g></svg>
<svg style="left:40.0px;top:740.0px" width="40" height="40" viewBox="0 0 40 40" fill="none" stroke="#c3c7c5" stroke-width="3.6" stroke-linecap="butt" stroke-linejoin="miter"><path d="M19.6 20 L34.7 11.5 V27.2 L19.6 36.2 Z" stroke-width="3.3"/><path d="M12.6 34.5 V15.2 L28.5 6.2" stroke-width="3.2"/><path d="M5.8 30.5 V10.8 L21.5 2.3" stroke-width="3.2"/></svg>
<svg style="left:40.0px;top:845.0px" width="40" height="40" viewBox="0 0 40 40" fill="none" stroke="#c3c7c5" stroke-width="3.6" stroke-linecap="butt" stroke-linejoin="miter"><polygon points="9.1,0.9 17.9,6.0 17.9,16.2 9.1,21.3 0.3,16.2 0.3,6.0" fill="#eeeeec" stroke="none"/><polygon points="20.1,20.2 28.8,25.2 28.8,35.2 20.1,40.2 11.4,35.2 11.4,25.2" fill="#eeeeec" stroke="none"/><g stroke="#eeeeec"><polygon points="31.1,2.6 38.5,6.8 38.5,15.3 31.1,19.6 23.7,15.4 23.7,6.8" fill="none" stroke-width="3.4"/></g></svg>
<svg style="left:40.0px;top:910.0px" width="40" height="40" viewBox="0 0 40 40" fill="none" stroke="#c3c7c5" stroke-width="3.6" stroke-linecap="butt" stroke-linejoin="miter"><g fill="#c3c7c5" stroke="none"><rect x="0" y="2" width="40" height="5"/><rect x="0" y="12" width="8" height="5"/><rect x="13" y="12" width="27" height="5"/><rect x="13" y="22" width="14" height="5"/><rect x="32" y="22" width="8" height="5"/><rect x="20" y="32" width="8" height="5"/></g></svg>
<svg style="left:40.0px;top:976.0px" width="40" height="40" viewBox="0 0 40 40" fill="none" stroke="#c3c7c5" stroke-width="3.6" stroke-linecap="butt" stroke-linejoin="miter"><path d="M10.1 7.7 V3 H36.1 V23.1 H27.1"/><path d="M6.9 17.9 V13.3 H21 V33.4 H15.3"/><rect x="2.6" y="23.5" width="7.7" height="12.5"/></svg>
<svg style="left:40.0px;top:1041.0px" width="40" height="40" viewBox="0 0 40 40" fill="none" stroke="#c3c7c5" stroke-width="3.6" stroke-linecap="butt" stroke-linejoin="miter"><path d="M19.8 15 V11.5 A8 8 0 1 0 11.8 19.5 H28.5 A8.2 8.2 0 1 1 20.3 28.2"/><polygon points="19.9,24.6 14.9,30.8 24.9,30.8" fill="#c3c7c5" stroke="none"/></svg>
<svg style="left:40.0px;top:1106.0px" width="40" height="40" viewBox="0 0 40 40" fill="none" stroke="#c3c7c5" stroke-width="3.6" stroke-linecap="butt" stroke-linejoin="miter"><path d="M20.1 3.2 L32.9 9.8 V20 C32.9 28 27 33.5 20.1 36.8 C13.2 33.5 7.3 28 7.3 20 V9.8 Z" stroke-linejoin="round"/><path d="M20.1 3 V37"/><path d="M7.6 13.8 L19 19.4"/><path d="M8.2 23.4 L19 29"/></svg>
<svg style="left:40.0px;top:1172.0px" width="40" height="40" viewBox="0 0 40 40" fill="none" stroke="#c3c7c5" stroke-width="3.6" stroke-linecap="butt" stroke-linejoin="miter"><path d="M20.1 4.9 A14.6 14.6 0 1 0 34.7 19.5"/><path d="M28.8 3.4000000000000004 Q30.80 9.40 36.8 11.4 Q30.80 13.40 28.8 19.4 Q26.80 13.40 20.8 11.4 Q26.80 9.40 28.8 3.4000000000000004 Z" fill="#c3c7c5" stroke="#c3c7c5" stroke-width="1" stroke-linejoin="round"/><path d="M18.5 16.400000000000002 Q19.80 20.30 23.7 21.6 Q19.80 22.90 18.5 26.8 Q17.20 22.90 13.3 21.6 Q17.20 20.30 18.5 16.400000000000002 Z" fill="#c3c7c5" stroke="#c3c7c5" stroke-width="1" stroke-linejoin="round"/></svg>
<svg style="left:38.0px;top:1275.5px" width="44" height="44" viewBox="0 0 44 44" fill="none" stroke="#c3c7c5" stroke-width="3.6" stroke-linecap="butt" stroke-linejoin="miter"><path d="M7.36 35.42 A17.6 17.6 0 0 1 23.74 8" stroke-dasharray="4.1 1.9" stroke-width="3.9"/><path d="M37.3 17.3 A17.45 17.45 0 0 1 37.3 33.7" stroke-width="5" stroke-linecap="round"/><path d="M33.3 6 L26.25 26.79 A4.2 4.2 0 1 1 18.95 22.61 Z" fill="#c3c7c5" stroke="#c3c7c5" stroke-width="1.2" stroke-linejoin="round"/></svg>
<svg style="left:40.0px;top:1342.5px" width="40" height="40" viewBox="0 0 40 40" fill="none" stroke="#c3c7c5" stroke-width="3.6" stroke-linecap="butt" stroke-linejoin="miter"><g fill="#c3c7c5" stroke="none"><rect x="1.1" y="0.6" width="7.3" height="5"/><rect x="11.8" y="0.6" width="7.7" height="5"/><rect x="22.9" y="0.6" width="8.1" height="5"/><rect x="1.1" y="11.7" width="11.5" height="5"/><rect x="1.1" y="22.4" width="8.4" height="5"/></g><circle cx="25.6" cy="21.7" r="11.5" stroke-width="3.8"/><path d="M16 30.6 L9.3 37.9" stroke-width="4.6" stroke-linecap="round"/><path d="M21 24.7 V21.6 A3 3 0 0 1 24 18.6 H29.8 V24.7 Z" fill="#c3c7c5" stroke="none"/></svg>
<svg style="left:40.0px;top:1431.0px" width="40" height="40" viewBox="0 0 40 40" fill="none" stroke="#c3c7c5" stroke-width="3.6" stroke-linecap="butt" stroke-linejoin="miter"><path d="M19.8 15 V11.5 A8 8 0 1 0 11.8 19.5 H28.5 A8.2 8.2 0 1 1 20.3 28.2"/><polygon points="19.9,24.6 14.9,30.8 24.9,30.8" fill="#c3c7c5" stroke="none"/></svg>
<svg style="left:40.0px;top:1495.0px" width="40" height="40" viewBox="0 0 40 40" fill="none" stroke="#c3c7c5" stroke-width="3.6" stroke-linecap="butt" stroke-linejoin="miter"><path d="M20.1 3.2 L32.9 9.8 V20 C32.9 28 27 33.5 20.1 36.8 C13.2 33.5 7.3 28 7.3 20 V9.8 Z" stroke-linejoin="round"/><path d="M20.1 3 V37"/><path d="M7.6 13.8 L19 19.4"/><path d="M8.2 23.4 L19 29"/></svg>
<svg style="left:40.0px;top:1561.5px" width="40" height="40" viewBox="0 0 40 40" fill="none" stroke="#c3c7c5" stroke-width="3.6" stroke-linecap="butt" stroke-linejoin="miter"><path d="M20.1 4.9 A14.6 14.6 0 1 0 34.7 19.5"/><path d="M28.8 3.4000000000000004 Q30.80 9.40 36.8 11.4 Q30.80 13.40 28.8 19.4 Q26.80 13.40 20.8 11.4 Q26.80 9.40 28.8 3.4000000000000004 Z" fill="#c3c7c5" stroke="#c3c7c5" stroke-width="1" stroke-linejoin="round"/><path d="M18.5 16.400000000000002 Q19.80 20.30 23.7 21.6 Q19.80 22.90 18.5 26.8 Q17.20 22.90 13.3 21.6 Q17.20 20.30 18.5 16.400000000000002 Z" fill="#c3c7c5" stroke="#c3c7c5" stroke-width="1" stroke-linejoin="round"/></svg>
<svg style="left:38.0px;top:1664.0px" width="44" height="44" viewBox="0 0 44 44" fill="none" stroke="#c3c7c5" stroke-width="3.6" stroke-linecap="butt" stroke-linejoin="miter"><path d="M7.36 35.42 A17.6 17.6 0 0 1 23.74 8" stroke-dasharray="4.1 1.9" stroke-width="3.9"/><path d="M37.3 17.3 A17.45 17.45 0 0 1 37.3 33.7" stroke-width="5" stroke-linecap="round"/><path d="M33.3 6 L26.25 26.79 A4.2 4.2 0 1 1 18.95 22.61 Z" fill="#c3c7c5" stroke="#c3c7c5" stroke-width="1.2" stroke-linejoin="round"/></svg>
<svg style="left:40.0px;top:1732.0px" width="40" height="40" viewBox="0 0 40 40" fill="none" stroke="#c3c7c5" stroke-width="3.6" stroke-linecap="butt" stroke-linejoin="miter"><g fill="#c3c7c5" stroke="none"><rect x="1.1" y="0.6" width="7.3" height="5"/><rect x="11.8" y="0.6" width="7.7" height="5"/><rect x="22.9" y="0.6" width="8.1" height="5"/><rect x="1.1" y="11.7" width="11.5" height="5"/><rect x="1.1" y="22.4" width="8.4" height="5"/></g><circle cx="25.6" cy="21.7" r="11.5" stroke-width="3.8"/><path d="M16 30.6 L9.3 37.9" stroke-width="4.6" stroke-linecap="round"/><path d="M21 24.7 V21.6 A3 3 0 0 1 24 18.6 H29.8 V24.7 Z" fill="#c3c7c5" stroke="none"/></svg>
<svg style="left:40.0px;top:2471.0px" width="40" height="40" viewBox="0 0 40 40" fill="none" stroke="#c3c7c5" stroke-width="3.6" stroke-linecap="butt" stroke-linejoin="miter"><g fill="#c3c7c5" stroke="none"><rect x="0.5" y="13" width="28.5" height="24.5"/><circle cx="14" cy="6.5" r="4.8"/><rect x="11" y="8" width="6" height="6"/><circle cx="36" cy="26.5" r="4.4"/><rect x="28" y="23.5" width="7" height="6"/></g><circle cx="14" cy="29.5" r="4.2" fill="#2a2d3a" stroke="none"/><rect x="12" y="31" width="4" height="7" fill="#2a2d3a" stroke="none"/></svg>
<svg style="left:40.0px;top:2536.0px" width="40" height="40" viewBox="0 0 40 40" fill="none" stroke="#c3c7c5" stroke-width="3.6" stroke-linecap="butt" stroke-linejoin="miter"><path d="M24 3.0 Q27.15 12.45 36.6 15.6 Q27.15 18.75 24 28.2 Q20.85 18.75 11.4 15.6 Q20.85 12.45 24 3.0 Z" fill="#c3c7c5" stroke="#c3c7c5" stroke-width="1" stroke-linejoin="round"/><circle cx="17" cy="23.7" r="5.2" fill="#2a2d3a" stroke="none"/><path d="M10.5 21.2 Q12.45 27.05 18.3 29 Q12.45 30.95 10.5 36.8 Q8.55 30.95 2.7 29 Q8.55 27.05 10.5 21.2 Z" fill="#c3c7c5" stroke="#c3c7c5" stroke-width="1" stroke-linejoin="round"/></svg>
<svg style="left:40.0px;top:2601.5px" width="40" height="40" viewBox="0 0 40 40" fill="none" stroke="#c3c7c5" stroke-width="3.4" stroke-linecap="butt" stroke-linejoin="miter"><rect x="2" y="3" width="28" height="22.5" rx="4.5"/><rect x="12" y="14" width="27" height="22" rx="4.5"/></svg>
<svg style="left:34.5px;top:2673.5px" width="51" height="51" viewBox="0 0 51 51">
<defs><clipPath id="av"><circle cx="25.5" cy="25.5" r="25"/></clipPath></defs>
<g clip-path="url(#av)"><rect width="51" height="51" fill="#c9c6bf"/><rect x="0" y="8" width="24" height="12" fill="#a88068"/><rect x="0" y="20" width="24" height="14" fill="#b7b9bb"/><rect x="0" y="34" width="30" height="17" fill="#9da0a6"/>
<ellipse cx="35" cy="24" rx="14" ry="18" fill="#b98a72"/><path d="M24 12 C28 2 44 2 50 12 L51 30 C48 20 44 12 36 11 Z" fill="#8a6a58"/><path d="M40 14 C47 18 50 30 46 42 L51 44 V8 Z" fill="#5b4a44"/><path d="M24 42 L34 40 L40 51 H22 Z" fill="#8d62b8"/><path d="M36 40 L51 36 V51 H40 Z" fill="#3b3440"/></g></svg>
<div class="t" style="left:32.0px;top:2850.7px;font-size:27.5px;letter-spacing:1.08px;color:#c3c7c5;">Help</div>
<div class="t" style="left:50.0px;top:2789.9px;font-size:45.0px;letter-spacing:0.00px;color:#c3c7c5;">?</div>
</body></html>
